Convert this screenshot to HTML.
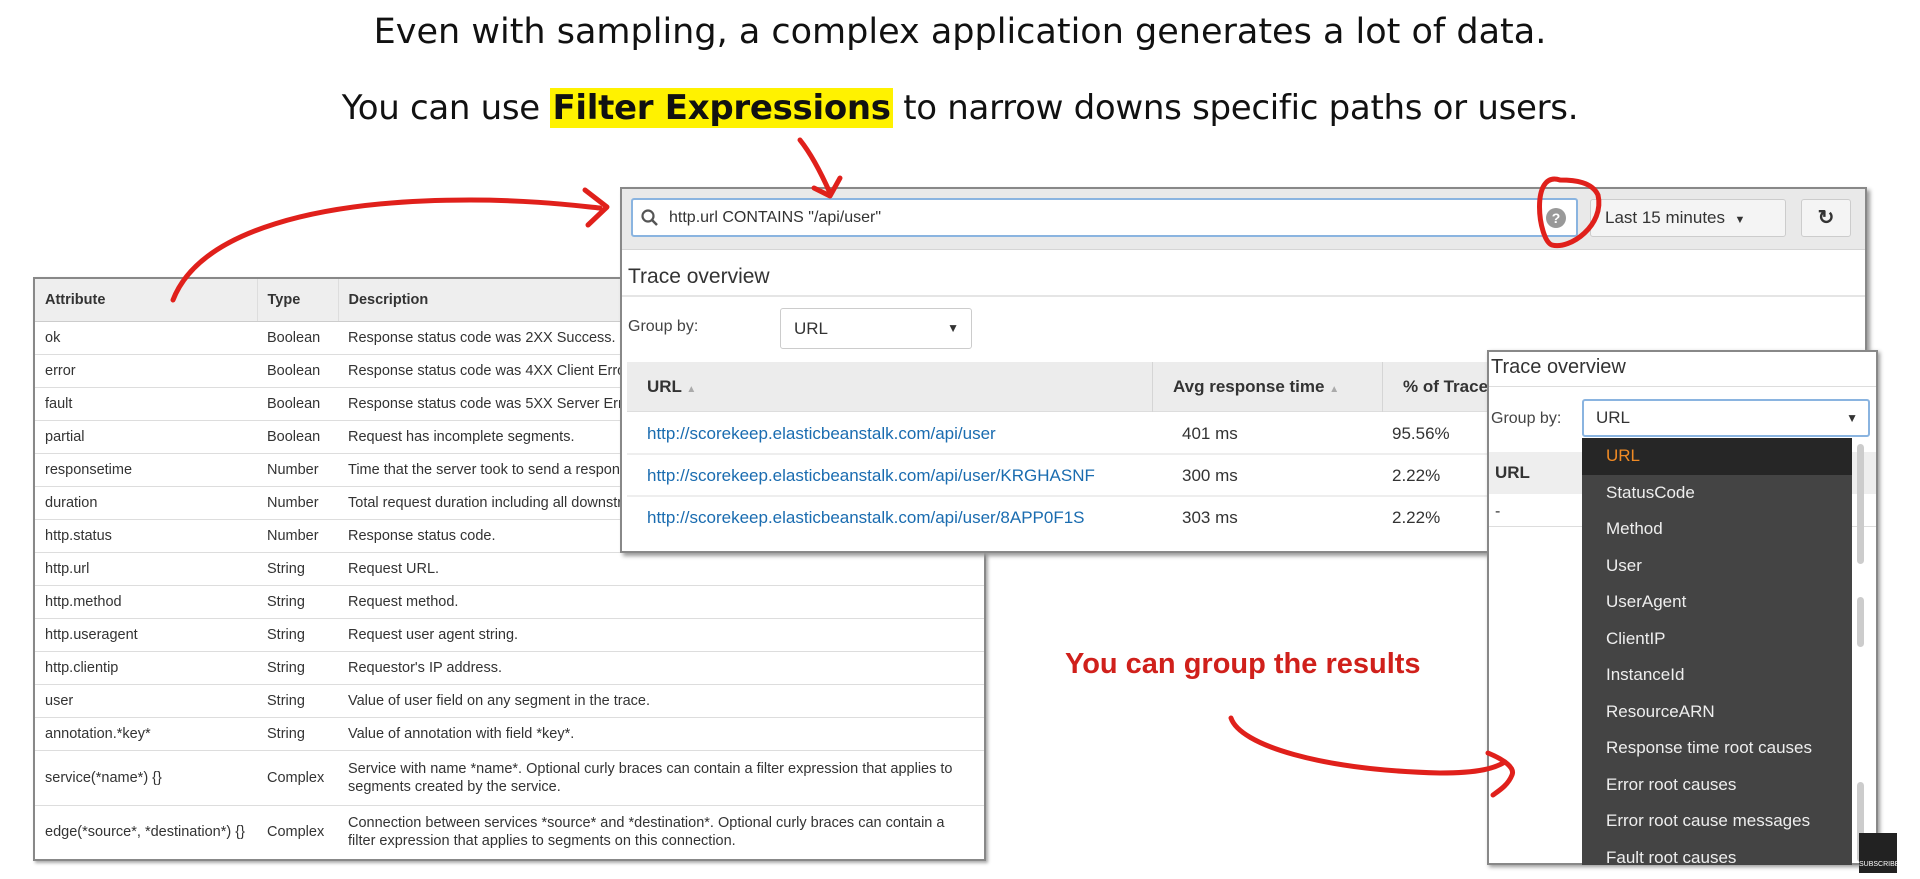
<!DOCTYPE html>
<html><head><meta charset="utf-8"><style>
*{margin:0;padding:0;box-sizing:border-box}
body{width:1920px;height:879px;background:#fff;position:relative;overflow:hidden;font-family:"Liberation Sans",sans-serif;color:#333}
.abs{position:absolute}
.h1{position:absolute;left:0;width:1920px;text-align:center;font-family:"DejaVu Sans","Liberation Sans",sans-serif;font-size:35px;color:#111}
.hl{background:#fff200;font-weight:bold;padding:0 2px}
table{border-collapse:collapse}
.attr{left:33px;top:277px;width:953px;border:2px solid #888;background:#fff;box-shadow:2px 2px 3px #aaa;font-size:14.5px;color:#333}
.attr td{border-bottom:1px solid #ddd;height:33px;padding:0 10px;vertical-align:middle;line-height:18px}
.attr th{background:#eee;height:43px;text-align:left;padding:0 10px;font-size:14.5px;border-right:1px solid #ddd;border-bottom:1px solid #ccc}
.trace{left:620px;top:187px;width:1247px;height:366px;border:2px solid #888;background:#fff;box-shadow:3px 3px 4px #999}
.link{color:#1a6cb0}
.dd div{height:36.5px;line-height:36.5px;padding-left:24px;color:#eee;font-size:17px}
</style></head><body>
<div class="h1" style="top:12px">Even with sampling, a complex application generates a lot of data.</div>
<div class="h1" style="top:88px;font-size:34px;letter-spacing:-0.3px">You can use <span class="hl">Filter Expressions</span> to narrow downs specific paths or users.</div>

<table class="abs attr">
<tr><th style="width:223px">Attribute</th><th style="width:81px">Type</th><th>Description</th></tr>
<tr><td>ok</td><td>Boolean</td><td>Response status code was 2XX Success.</td></tr>
<tr><td>error</td><td>Boolean</td><td>Response status code was 4XX Client Error.</td></tr>
<tr><td>fault</td><td>Boolean</td><td>Response status code was 5XX Server Error.</td></tr>
<tr><td>partial</td><td>Boolean</td><td>Request has incomplete segments.</td></tr>
<tr><td>responsetime</td><td>Number</td><td>Time that the server took to send a response.</td></tr>
<tr><td>duration</td><td>Number</td><td>Total request duration including all downstream calls.</td></tr>
<tr><td>http.status</td><td>Number</td><td>Response status code.</td></tr>
<tr><td>http.url</td><td>String</td><td>Request URL.</td></tr>
<tr><td>http.method</td><td>String</td><td>Request method.</td></tr>
<tr><td>http.useragent</td><td>String</td><td>Request user agent string.</td></tr>
<tr><td>http.clientip</td><td>String</td><td>Requestor's IP address.</td></tr>
<tr><td>user</td><td>String</td><td>Value of user field on any segment in the trace.</td></tr>
<tr><td>annotation.*key*</td><td>String</td><td>Value of annotation with field *key*.</td></tr>
<tr><td style="height:55px">service(*name*) {}</td><td>Complex</td><td>Service with name *name*. Optional curly braces can contain a filter expression that applies to segments created by the service.</td></tr>
<tr><td style="height:55px;border:0">edge(*source*, *destination*) {}</td><td style="border:0">Complex</td><td style="border:0">Connection between services *source* and *destination*. Optional curly braces can contain a filter expression that applies to segments on this connection.</td></tr>
</table>

<div class="abs trace">
 <div class="abs" style="left:0;top:0;width:1243px;height:61px;background:#e9e9e9;border-bottom:1px solid #d5d5d5"></div>
 <div class="abs" style="left:9px;top:9px;width:947px;height:39px;background:#fff;border:2px solid #8ab4e0;border-radius:3px;font-size:16px;line-height:35px;padding-left:36px;color:#333">http.url CONTAINS "/api/user"
  <svg class="abs" style="left:8px;top:9px" width="18" height="18"><circle cx="7" cy="7" r="5.5" fill="none" stroke="#555" stroke-width="2.2"/><line x1="11" y1="11" x2="16" y2="16" stroke="#555" stroke-width="2.5"/></svg>
  <div class="abs" style="right:10px;top:8px;width:20px;height:20px;border-radius:50%;background:#999;color:#fff;font-size:14px;line-height:20px;text-align:center;font-weight:bold">?</div>
 </div>
 <div class="abs" style="left:968px;top:10px;width:196px;height:38px;background:#f4f4f4;border:1px solid #ccc;border-radius:3px;font-size:17px;line-height:36px;padding-left:14px;color:#333">Last 15 minutes &nbsp;<span style="font-size:11px">▼</span></div>
 <div class="abs" style="left:1179px;top:10px;width:50px;height:38px;background:#f4f4f4;border:1px solid #ccc;border-radius:3px;font-size:20px;line-height:36px;text-align:center;font-weight:bold">↻</div>
 <div class="abs" style="left:6px;top:76px;font-size:21px;color:#333">Trace overview</div>
 <div class="abs" style="left:0;top:106px;width:1243px;height:2px;background:#e5e5e5"></div>
 <div class="abs" style="left:6px;top:129px;font-size:16px;color:#444">Group by:</div>
 <div class="abs" style="left:158px;top:119px;width:192px;height:41px;border:1px solid #ccc;border-radius:3px;font-size:17px;line-height:39px;padding-left:13px">URL<span class="abs" style="right:12px;font-size:12px">▼</span></div>
 <div class="abs" style="left:5px;top:173px;width:1238px;height:50px;background:#ececec;border-bottom:1px solid #ddd;font-weight:bold;font-size:17px;line-height:50px">
  <span class="abs" style="left:20px">URL <span style="font-size:10px;color:#aaa">▲</span></span>
  <span class="abs" style="left:525px;top:0;height:50px;border-left:1px solid #d5d5d5"></span>
  <span class="abs" style="left:546px">Avg response time <span style="font-size:10px;color:#aaa">▲</span></span>
  <span class="abs" style="left:755px;top:0;height:50px;border-left:1px solid #d5d5d5"></span>
  <span class="abs" style="left:776px">% of Traces</span>
 </div>
 <div class="abs" style="left:5px;top:224px;width:1238px;font-size:17px">
  <div style="height:42px;line-height:42px;border-bottom:2px solid #eee;position:relative"><span class="abs link" style="left:20px">http://scorekeep.elasticbeanstalk.com/api/user</span><span class="abs" style="left:555px">401 ms</span><span class="abs" style="left:765px">95.56%</span></div>
  <div style="height:42px;line-height:42px;border-bottom:2px solid #eee;position:relative"><span class="abs link" style="left:20px">http://scorekeep.elasticbeanstalk.com/api/user/KRGHASNF</span><span class="abs" style="left:555px">300 ms</span><span class="abs" style="left:765px">2.22%</span></div>
  <div style="height:42px;line-height:42px;position:relative"><span class="abs link" style="left:20px">http://scorekeep.elasticbeanstalk.com/api/user/8APP0F1S</span><span class="abs" style="left:555px">303 ms</span><span class="abs" style="left:765px">2.22%</span></div>
 </div>
</div>

<div class="abs" style="left:1487px;top:350px;width:391px;height:515px;border:2px solid #888;background:#fff;box-shadow:2px 2px 4px #999">
 <div class="abs" style="left:2px;top:4px;font-size:20px;color:#333">Trace overview</div>
 <div class="abs" style="left:0;top:34px;width:387px;height:1px;background:#ddd"></div>
 <div class="abs" style="left:2px;top:58px;font-size:16px;color:#444">Group by:</div>
 <div class="abs" style="left:93px;top:47px;width:288px;height:38px;border:2px solid #8ab4e0;border-radius:3px;font-size:17px;line-height:34px;padding-left:12px">URL<span class="abs" style="right:10px;font-size:12px">▼</span></div>
 <div class="abs" style="left:0;top:100px;width:387px;height:42px;background:#eee;font-weight:bold;font-size:17px;line-height:42px;padding-left:6px">URL</div>
 <div class="abs" style="left:6px;top:140px;font-size:16px;line-height:40px">-</div>
 <div class="abs" style="left:0;top:174px;width:387px;height:1px;background:#ddd"></div>
 <div class="abs dd" style="left:93px;top:86px;width:270px;height:427px;background:#444;overflow:hidden">
  <div style="background:#262626;color:#f08a24">URL</div><div>StatusCode</div><div>Method</div><div>User</div><div>UserAgent</div><div>ClientIP</div><div>InstanceId</div><div>ResourceARN</div><div>Response time root causes</div><div>Error root causes</div><div>Error root cause messages</div><div>Fault root causes</div>
 </div>
 <div class="abs" style="left:368px;top:92px;width:7px;height:120px;background:#ccc;border-radius:4px"></div>
 <div class="abs" style="left:368px;top:245px;width:7px;height:50px;background:#ccc;border-radius:4px"></div>
 <div class="abs" style="left:368px;top:430px;width:7px;height:80px;background:#ccc;border-radius:4px"></div>
</div>

<div class="abs" style="left:1065px;top:648px;font-size:29px;font-weight:bold;color:#d0201b">You can group the results</div>

<div class="abs" style="left:1859px;top:833px;width:38px;height:40px;background:#222;color:#fff;font-size:7px;text-align:center;padding-top:28px">SUBSCRIBE</div>

<svg class="abs" style="left:0;top:0" width="1920" height="879">
<g fill="none" stroke="#e0201b" stroke-width="5" stroke-linecap="round" stroke-linejoin="round">
<path d="M173 300 C200 230 320 200 470 200 C530 200 570 205 600 208"/>
<path d="M585 190 L607 207 L588 225"/>
<path d="M800 140 C812 155 822 175 830 193"/>
<path d="M814 188 L830 196 L840 178"/>
<path d="M1560 180 C1530 170 1538 240 1552 245 C1570 250 1605 225 1598 195 C1592 182 1575 180 1560 180"/>
<path d="M1231 718 C1240 745 1320 770 1440 773 C1480 773 1495 768 1505 762"/>
<path d="M1488 753 C1505 760 1515 768 1512 775 C1508 785 1500 790 1493 795"/>
</g>
</svg>
</body></html>
